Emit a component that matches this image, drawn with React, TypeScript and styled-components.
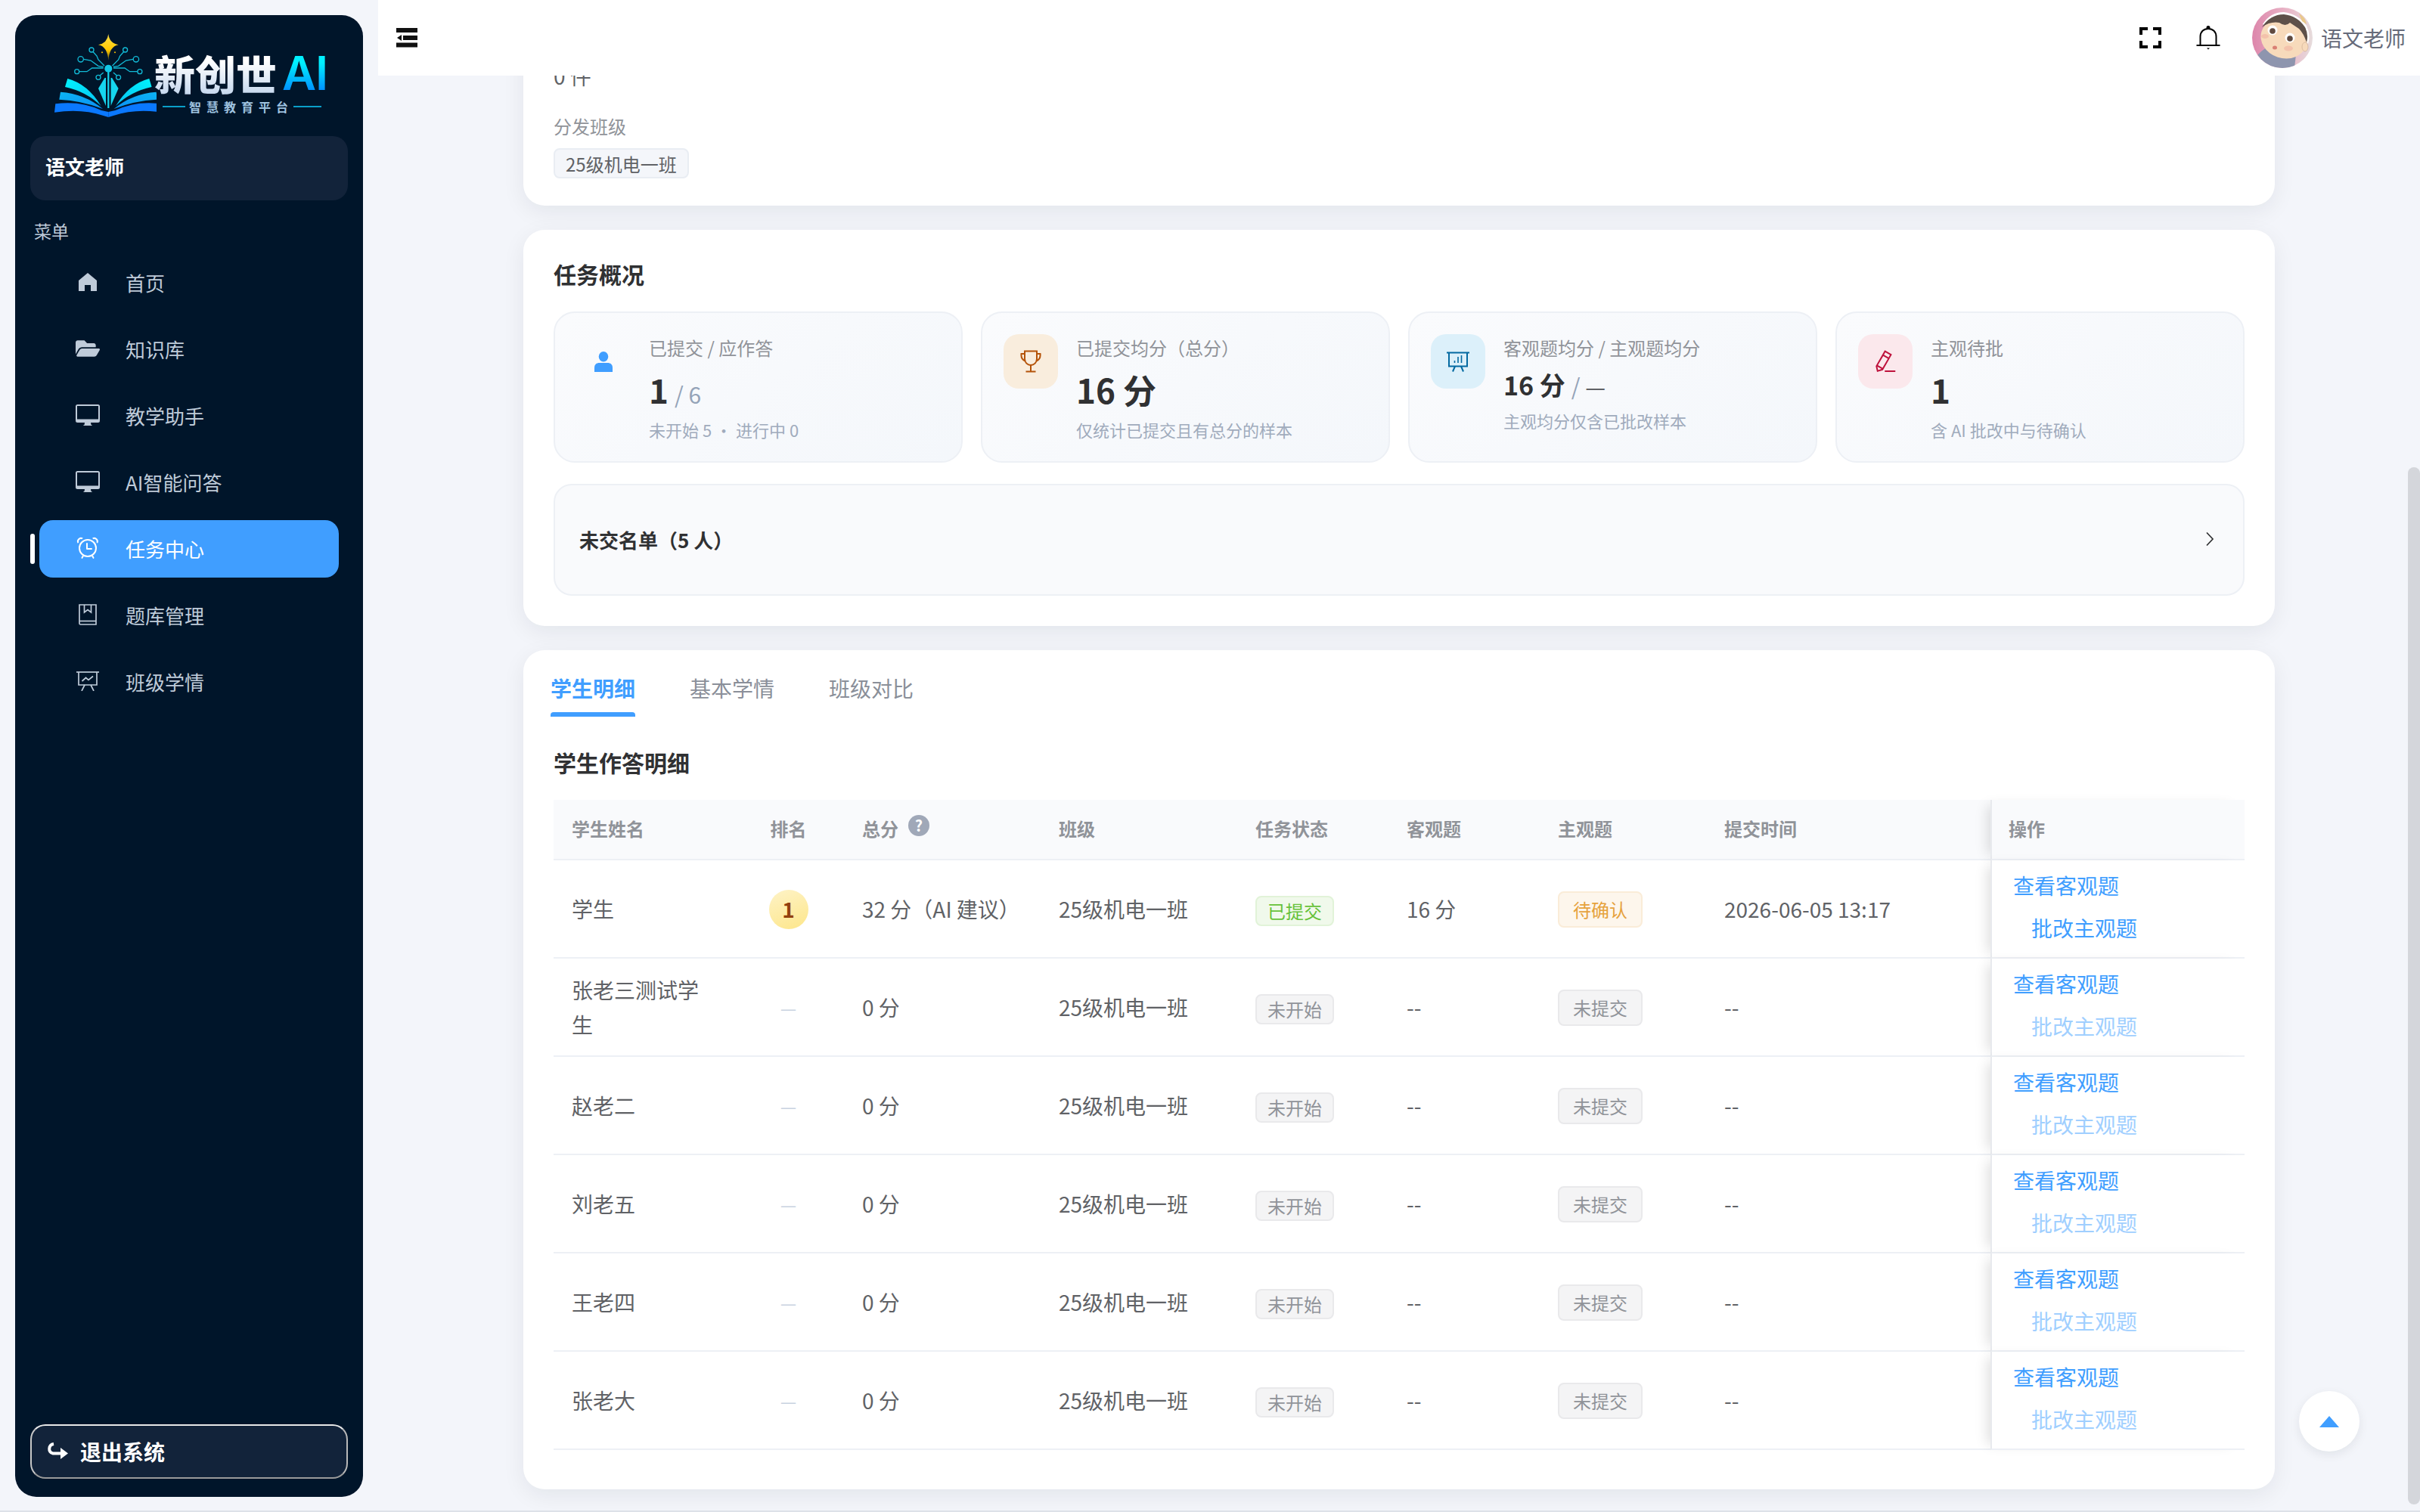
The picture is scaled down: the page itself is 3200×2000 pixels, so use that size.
import React from "react";
import styled, { createGlobalStyle } from "styled-components";
import { FaFolderOpen } from "react-icons/fa";

const Global = createGlobalStyle`
  html, body { margin: 0; padding: 0; background: #dde1e8; }
  body { font-family: "Noto Sans CJK SC", "Noto Sans", sans-serif; color: #606266; }
  * { box-sizing: border-box; }
`;

const Page = styled.div`
  display: flex;
  width: 3200px;
  height: 1998px;
  background: #f3f5fa;
  overflow: hidden;
`;

/* ---------- sidebar ---------- */
const Sidebar = styled.aside`
  flex: none;
  display: flex;
  flex-direction: column;
  width: 460px;
  height: 1960px;
  margin: 20px 20px 18px 20px;
  background: #00152a;
  border-radius: 28px;
`;
const Logo = styled.div`
  display: flex;
  height: 160px;
  padding: 23px 0 0 52px;
`;
const LogoMark = styled.svg`
  flex: none;
  width: 135px;
  height: 114px;
`;
const LogoText = styled.div`
  margin: 26px 0 0 -3px;
`;
const LogoTitle = styled.div`
  display: flex;
  align-items: center;
  height: 56px;
  white-space: nowrap;
`;
const LogoName = styled.span`
  font-size: 54px;
  line-height: 56px;
  font-weight: 900;
  background: linear-gradient(180deg, #ffffff 20%, #c6d8ee 100%);
  -webkit-background-clip: text;
  background-clip: text;
  color: transparent;
`;
const LogoAi = styled.span`
  margin-left: 7px;
  font-family: "Inter", "Liberation Sans", sans-serif;
  font-size: 62px;
  line-height: 56px;
  font-weight: 600;
  letter-spacing: -1px;
  background: linear-gradient(180deg, #00f0ff 25%, #0090ff 90%);
  -webkit-background-clip: text;
  background-clip: text;
  color: transparent;
`;
const LogoSub = styled.div`
  display: flex;
  align-items: center;
  margin: 6px 0 0 11px;
  height: 20px;
  font-size: 16px;
  line-height: 20px;
  font-weight: 700;
  letter-spacing: 7px;
  color: #9fc3e0;
  white-space: nowrap;
`;
const LogoRule = styled.i<{ $w: number }>`
  display: block;
  width: ${(p) => p.$w}px;
  height: 2px;
  margin-right: 5px;
  background: #0a9fc9;
`;
const UserBox = styled.div`
  display: flex;
  align-items: center;
  height: 85px;
  margin: 0 20px;
  padding: 0 0 6px 20px;
  background: #12233a;
  border-radius: 20px;
  color: #fff;
  font-size: 26px;
  font-weight: 700;
`;
const MenuLabel = styled.div`
  margin: 23px 0 14px 25px;
  font-size: 23px;
  line-height: 34px;
  color: #bfcbd9;
`;
const Nav = styled.nav`
  display: flex;
  flex-direction: column;
  gap: 12px;
  margin: 0 32px;
`;
const NavItem = styled.div<{ $active?: boolean }>`
  position: relative;
  display: flex;
  align-items: center;
  gap: 34px;
  height: 76px;
  padding: 0 0 2px 48px;
  border-radius: 18px;
  font-size: 26px;
  color: ${(p) => (p.$active ? "#fff" : "#bfcbd9")};
  background: ${(p) => (p.$active ? "#409eff" : "transparent")};
  ${(p) =>
    p.$active &&
    `&::before {
      content: "";
      position: absolute;
      left: -12px;
      top: 18px;
      width: 6px;
      height: 40px;
      border-radius: 3px;
      background: #fff;
    }`}
`;
const NavIcon = styled.span`
  flex: none;
  display: flex;
  align-items: center;
  justify-content: center;
  width: 32px;
  height: 32px;
  color: inherit;
`;
const Logout = styled.div`
  display: flex;
  align-items: center;
  gap: 16px;
  height: 72px;
  margin: auto 20px 24px;
  padding-left: 20px;
  background: #12233a;
  border: 2px solid;
  border-color: #e8e8e8 #b8b8b8 #9a9a9a #c8c8c8;
  border-radius: 20px;
  color: #fff;
  font-size: 28px;
  font-weight: 700;
`;

/* ---------- right column ---------- */
const Column = styled.div`
  flex: 1;
  min-width: 0;
  display: flex;
  flex-direction: column;
`;
const Header = styled.header`
  flex: none;
  display: flex;
  align-items: center;
  height: 100px;
  padding: 0 19px 0 24px;
  background: #fff;
`;
const HeaderTools = styled.div`
  display: flex;
  align-items: center;
  margin-left: auto;
`;
const Avatar = styled.svg`
  width: 80px;
  height: 80px;
  margin-left: 42px;
  border-radius: 50%;
`;
const HeaderName = styled.span`
  margin-left: 11px;
  font-size: 28px;
  color: #666b7a;
`;
const BellIcon = styled.svg`
  margin-left: 46px;
`;
const Main = styled.main`
  position: relative;
  flex: 1;
  min-height: 0;
  overflow: hidden;
`;
const Scroller = styled.div`
  display: flex;
  flex-direction: column;
  gap: 32px;
  width: 2316px;
  margin: -60px auto 0;
`;
const Card = styled.section<{ $pad: string }>`
  padding: ${(p) => p.$pad};
  background: #fff;
  border-radius: 28px;
  box-shadow: 0 8px 30px rgba(15, 23, 42, 0.07);
`;
const FieldValue = styled.div`
  font-size: 28px;
  line-height: 40px;
  color: #606266;
`;
const FieldLabel = styled.div`
  margin: 30px 0 12px;
  font-size: 24px;
  line-height: 34px;
  color: #909399;
`;
const ClassTag = styled.span`
  display: inline-flex;
  align-items: center;
  height: 40px;
  padding: 0 14px;
  background: #f4f6fa;
  border: 2px solid #e9edf3;
  border-radius: 8px;
  font-size: 24px;
  color: #606266;
`;
const SectionTitle = styled.h2`
  margin: 0;
  font-size: 30px;
  line-height: 40px;
  font-weight: 700;
  color: #303133;
`;
const StatGrid = styled.div`
  display: grid;
  grid-template-columns: repeat(4, 1fr);
  gap: 24px;
  margin-top: 30px;
`;
const Stat = styled.div`
  display: flex;
  gap: 24px;
  height: 200px;
  padding: 28px;
  background: linear-gradient(145deg, #fafbfd, #f4f7fb);
  border: 2px solid #edf0f5;
  border-radius: 28px;
`;
const StatIcon = styled.div<{ $bg: string; $fg: string }>`
  flex: none;
  display: flex;
  align-items: center;
  justify-content: center;
  width: 72px;
  height: 72px;
  border-radius: 20px;
  background: ${(p) => p.$bg};
  color: ${(p) => p.$fg};
`;
const StatBody = styled.div`
  min-width: 0;
`;
const StatLabel = styled.div`
  font-size: 24px;
  line-height: 36px;
  color: #909399;
`;
const StatValue = styled.div<{ $small?: boolean }>`
  height: ${(p) => (p.$small ? 48 : 60)}px;
  margin-top: ${(p) => (p.$small ? 7 : 7)}px;
  font-size: ${(p) => (p.$small ? 34 : 44)}px;
  line-height: ${(p) => (p.$small ? 48 : 60)}px;
  font-weight: 700;
  color: #303133;
  white-space: nowrap;
`;
const StatSuffix = styled.span`
  margin-left: 8px;
  font-size: 30px;
  line-height: 1;
  font-weight: 400;
  color: #94a3b8;
`;
const StatDash = styled.span`
  color: #606266;
`;
const StatNote = styled.div`
  margin-top: 7px;
  font-size: 22px;
  line-height: 32px;
  color: #a0abbc;
  white-space: nowrap;
`;
const MissingBar = styled.div`
  display: flex;
  align-items: center;
  justify-content: space-between;
  height: 148px;
  margin-top: 28px;
  padding: 0 38px 2px 32px;
  background: #f9fafc;
  border: 2px solid #edf0f5;
  border-radius: 24px;
  font-size: 26px;
  font-weight: 700;
  color: #303133;
`;
const Tabs = styled.div`
  display: flex;
  gap: 72px;
  margin-left: -4px;
`;
const Tab = styled.div<{ $active?: boolean }>`
  position: relative;
  height: 58px;
  font-size: 28px;
  line-height: 40px;
  font-weight: ${(p) => (p.$active ? 600 : 400)};
  color: ${(p) => (p.$active ? "#409eff" : "#8a8f99")};
  ${(p) =>
    p.$active &&
    `&::after {
      content: "";
      position: absolute;
      left: 0;
      right: 0;
      bottom: 0;
      height: 6px;
      border-radius: 4px 4px 0 0;
      background: #409eff;
    }`}
`;
const TableTitle = styled(SectionTitle)`
  margin: 40px 0 30px;
`;
const Table = styled.table`
  width: 2236px;
  table-layout: fixed;
  border-collapse: separate;
  border-spacing: 0;
`;
const Col = styled.col<{ $w: number }>`
  width: ${(p) => p.$w}px;
`;
const Th = styled.th<{ $center?: boolean }>`
  height: 80px;
  padding: 0 24px 4px;
  background: #f9fafc;
  border-bottom: 2px solid #edf0f5;
  text-align: ${(p) => (p.$center ? "center" : "left")};
  font-size: 24px;
  font-weight: 700;
  color: #909399;
`;
const ActionTh = styled(Th)`
  position: relative;
  padding-left: 22px;
  border-left: 2px solid #e8eaee;
  box-shadow: -12px 0 16px -8px rgba(0, 0, 0, 0.13);
`;
const Help = styled.span`
  display: inline-flex;
  align-items: center;
  justify-content: center;
  width: 28px;
  height: 28px;
  margin-left: 13px;
  border-radius: 50%;
  background: #a0a8b8;
  color: #fff;
  font-size: 20px;
  line-height: 1;
  vertical-align: 6px;
`;
const Td = styled.td<{ $center?: boolean }>`
  height: 130px;
  padding: 0 24px;
  background: #fff;
  border-bottom: 2px solid #edf0f5;
  text-align: ${(p) => (p.$center ? "center" : "left")};
  font-size: 28px;
  line-height: 46px;
  color: #606266;
`;
const ActionTd = styled(Td)`
  position: relative;
  padding-left: 28px;
  border-left: 2px solid #e8eaee;
  box-shadow: -12px 0 16px -8px rgba(0, 0, 0, 0.13);
`;
const Actions = styled.div`
  display: flex;
  flex-direction: column;
  align-items: flex-start;
  gap: 16px;
  margin-top: -6px;
`;
const ActionLink = styled.span<{ $indent?: boolean; $off?: boolean }>`
  margin-left: ${(p) => (p.$indent ? 24 : 0)}px;
  line-height: 40px;
  color: ${(p) => (p.$off ? "#a0cfff" : "#409eff")};
`;
const RankBadge = styled.span`
  display: inline-flex;
  align-items: center;
  justify-content: center;
  width: 52px;
  height: 52px;
  padding-bottom: 2px;
  border-radius: 50%;
  background: linear-gradient(160deg, #fef3c7, #fde68a);
  font-size: 28px;
  font-weight: 700;
  color: #92400e;
  vertical-align: middle;
`;
const RankDash = styled.span`
  font-size: 24px;
  color: #c8d2e0;
`;

const tagTone = {
  success: { bg: "#f0f9eb", line: "#e1f3d8", fg: "#67c23a" },
  warning: { bg: "#fdf6ec", line: "#faecd8", fg: "#e6a23c" },
  muted: { bg: "#f4f4f5", line: "#e9e9eb", fg: "#909399" },
};
const StatusTag = styled.span<{ $tone: keyof typeof tagTone; $big?: boolean }>`
  display: inline-flex;
  align-items: center;
  height: ${(p) => (p.$big ? 48 : 40)}px;
  padding: 0 ${(p) => (p.$big ? 18 : 14)}px;
  background: ${(p) => tagTone[p.$tone].bg};
  border: 2px solid ${(p) => tagTone[p.$tone].line};
  border-radius: 8px;
  font-size: 24px;
  line-height: 1;
  color: ${(p) => tagTone[p.$tone].fg};
  vertical-align: middle;
  transform: translateY(-1px);
`;

const Thumb = styled.div`
  position: absolute;
  top: 518px;
  right: 0;
  width: 16px;
  height: 1372px;
  border-radius: 8px;
  background: #d4d6db;
`;
const BackTop = styled.div`
  position: absolute;
  right: 80px;
  bottom: 78px;
  display: flex;
  align-items: center;
  justify-content: center;
  width: 80px;
  height: 80px;
  border-radius: 50%;
  background: #fff;
  box-shadow: 0 4px 14px rgba(15, 23, 42, 0.08);
`;

/* ---------- drawings ---------- */
const EP = ({ size = 32, children }: { size?: number; children: React.ReactNode }) => (
  <svg width={size} height={size} viewBox="0 0 1024 1024" fill="currentColor">
    {children}
  </svg>
);
const HomeIcon = () => (
  <EP>
    <path d="M512 128 128 447.936V896h255.936V640H640v256h255.936V447.936z" />
  </EP>
);
const MonitorIcon = () => (
  <svg width="32" height="28" viewBox="0 0 32 28" fill="currentColor">
    <path
      fillRule="evenodd"
      d="M2.5 0h27A2.5 2.5 0 0 1 32 2.5v19a2.5 2.5 0 0 1-2.5 2.5h-27A2.5 2.5 0 0 1 0 21.500v-19A2.500 2.500 0 0 1 2.500 0zM2 2v17.500h28V2z"
    />
    <path d="M12 24h8l.5 3h1v1h-11v-1h1z" />
  </svg>
);
const AlarmIcon = () => (
  <EP>
    <path d="M512 832a320 320 0 1 0 0-640 320 320 0 0 0 0 640zm0 64a384 384 0 1 1 0-768 384 384 0 0 1 0 768z" />
    <path d="m292.288 824.576 55.424 32-48 83.136a32 32 0 1 1-55.424-32l48-83.136zm439.424 0-55.424 32 48 83.136a32 32 0 1 0 55.424-32l-48-83.136zM512 512h160a32 32 0 0 1 0 64H480a32 32 0 0 1-32-32V320a32 32 0 0 1 64 0v192zM90.496 312.256A160 160 0 0 1 312.320 90.496l-46.848 46.848a96 96 0 0 0-128 128L90.560 312.256zm835.264 0A160 160 0 0 0 704 90.496l46.848 46.848a96 96 0 0 1 128 128l46.912 46.912z" />
  </EP>
);
const BookIcon = () => (
  <svg width="24" height="28" viewBox="0 0 24 28" fill="none" stroke="currentColor" strokeWidth="1.7">
    <path d="M1 1h22v26H2.500A1.500 1.500 0 0 1 1 25.500z" />
    <path d="M1 22.500h22" />
    <path d="M7.500 1v10l4.500-3.500L16.500 11V1" />
  </svg>
);
const BoardLineIcon = () => (
  <svg width="30" height="26" viewBox="0 0 30 26" fill="none" stroke="currentColor" strokeWidth="1.7">
    <path d="M0 1h30" />
    <path d="M3 1v17h24V1" />
    <path d="M11 18l-4 8M19 18l4 8" />
    <path d="M7.500 13l5-4.500 3.500 3 6-5" />
  </svg>
);
const LogoutIcon = () => (
  <svg width="28" height="24" viewBox="0 0 28 24" fill="none">
    <path d="M9 2C2 3 1 13 8 14.500h11" stroke="#fff" strokeWidth="4" />
    <path d="M18 7l10 7.500L18 22z" fill="#fff" />
  </svg>
);
const FoldIcon = () => (
  <svg width="28" height="26" viewBox="0 0 28 26" fill="#111">
    <rect width="28" height="6" />
    <rect x="9" y="10" width="19" height="6" />
    <rect y="19.500" width="28" height="6" />
    <path d="M1 13l6-4v8z" />
  </svg>
);
const FullIcon = () => (
  <svg width="29" height="28" viewBox="0 0 29 28" fill="none" stroke="#000" strokeWidth="4">
    <path d="M11 2H2v8M18 2h9v8M11 26H2v-8M18 26h9v-8" />
  </svg>
);
const Bell = () => (
  <BellIcon width="32" height="32" viewBox="0 0 32 32" fill="none" stroke="#000" strokeWidth="2">
    <circle cx="16" cy="2.500" r="1.500" fill="#000" />
    <path d="M5.500 25V14.500C5.500 8 10 4 16 4s10.500 4 10.500 10.500V25" />
    <path d="M0.500 26h31" />
    <path d="M14 29.500h4l-2 2z" fill="#000" stroke="none" />
  </BellIcon>
);
const UserFig = () => (
  <svg width="24" height="27" viewBox="0 0 24 27" fill="currentColor">
    <ellipse cx="12" cy="6.800" rx="6.300" ry="6.800" />
    <path d="M0 27v-5.500C0 17 3 15 6.500 15h11c3.500 0 6.500 2 6.500 6.500V27z" />
  </svg>
);
const TrophyIcon = () => (
  <svg width="28" height="30" viewBox="0 0 28 30" fill="none" stroke="currentColor" strokeWidth="2">
    <path d="M6 1.500h16v10.500a8 8 0 0 1-16 0z" />
    <path d="M6 5H1.500c-.5 4.500 1 8 5.500 9.500M22 5h4.500c.5 4.500-1 8-5.500 9.500" />
    <path d="M14 20v8.500M7.500 28.500h13" />
  </svg>
);
const BoardIcon = () => (
  <svg width="30" height="27" viewBox="0 0 30 27" fill="none" stroke="currentColor" strokeWidth="2">
    <path d="M0 1.500h30" />
    <path d="M3 1.500v18h24v-18" />
    <path d="M11 19.500l-3 7M19 19.500l3 7" />
    <path d="M10.500 15v-3M15 15V7M19.500 15V5" strokeWidth="1.600" />
  </svg>
);
const PenIcon = () => (
  <EP>
    <path d="m199.04 672.64 193.984 112 224-387.968-193.920-112-224 388.032zm-23.872 60.160 32.896 148.288 144.896-45.696L175.168 732.800zM455.040 229.248l193.920 112 56.704-98.112-193.984-112-56.640 98.112zM104.320 708.800l384-665.024 304.768 175.936L409.152 884.800h.064l-248.448 78.336L104.320 708.800zm384 254.272v-64h448v64h-448z" />
  </EP>
);
const Chevron = () => (
  <svg width="12" height="20" viewBox="0 0 12 20" fill="none" stroke="#303133" strokeWidth="1.700">
    <path d="M2 1.500l8 8.500-8 8.500" />
  </svg>
);

const AvatarPic = () => (
  <Avatar viewBox="0 0 80 80">
    <defs>
      <linearGradient id="avBg" x1="0" y1="0" x2="1" y2="0">
        <stop offset="0" stopColor="#dd86ab" />
        <stop offset="0.6" stopColor="#e9b7c8" />
        <stop offset="1" stopColor="#e6dcdc" />
      </linearGradient>
    </defs>
    <rect width="80" height="80" fill="url(#avBg)" />
    <path d="M2 70 Q10 56 26 50 L58 62 L56 80 H6z" fill="#8e95ae" />
    <path d="M14 22 Q24 6 42 6 Q60 8 72 24 Q78 36 74 48 L60 30 L22 26z" fill="#fff" />
    <ellipse cx="42" cy="41" rx="31" ry="26" transform="rotate(18 42 41)" fill="#f7dabb" />
    <path d="M13 26 Q24 9 42 9 Q60 11 70 26 Q75 36 72 46 Q68 34 62 28 Q56 24 50 20 Q44 26 36 20 Q24 18 13 26z" fill="#5e5049" />
    <path d="M62 8 Q70 12 72 22 L66 18z" fill="#e9c98a" />
    <circle cx="27" cy="30" r="6.500" fill="#fff" />
    <circle cx="27" cy="31" r="3.800" fill="#5f4a40" />
    <circle cx="50" cy="40" r="6.500" fill="#fff" />
    <circle cx="50" cy="41" r="3.800" fill="#5f4a40" />
    <ellipse cx="30" cy="53" rx="3" ry="2.500" fill="#d97f74" />
    <ellipse cx="17" cy="38" rx="5" ry="3" fill="#f3c2ab" />
    <ellipse cx="48" cy="54" rx="6" ry="3.500" fill="#f3c2ab" />
    <ellipse cx="70" cy="52" rx="4" ry="6" fill="#f7dabb" stroke="#c9a98e" strokeWidth="0.600" />
  </Avatar>
);

const CircuitHalf = () => (
  <g fill="none" stroke="#12bcd8" strokeWidth="1.300">
    <circle cx="49" cy="23" r="3" />
    <path d="M51 25.500l5 5.500 2 5 8 8" />
    <circle cx="34.700" cy="35.300" r="3.700" />
    <path d="M38.500 35.300L48 37l10 7.300 6.700 1" />
    <circle cx="29.700" cy="51.700" r="3" />
    <path d="M32.700 51.700H43l6.700-4.700h15" />
    <circle cx="58" cy="59.300" r="3" />
    <path d="M60 57l4.700-4" />
    <path d="M66.500 60L58 74l10 23V60z" fill="#16d6ee" stroke="none" />
  </g>
);
const BookHalf = () => (
  <g>
    <path d="M17.300 61Q44 68 61.500 97 42 78 14 72z" fill="url(#lgTop)" />
    <path d="M8 78.700Q40 81 64 101 36 90 6.300 88.700z" fill="url(#lgMid)" />
    <path d="M1.300 94.300Q35 90 62 103l9.300 2v7l-6.600-2Q35 100 0 105.700z" fill="#0a78ff" />
  </g>
);
const LogoDrawing = () => (
  <LogoMark viewBox="0 0 135 114">
    <defs>
      <linearGradient id="lgTop" x1="0" y1="0" x2="1" y2="1">
        <stop offset="0" stopColor="#00f4ff" />
        <stop offset="1" stopColor="#08c0f0" />
      </linearGradient>
      <linearGradient id="lgMid" x1="0" y1="0" x2="1" y2="1">
        <stop offset="0" stopColor="#0cb4f4" />
        <stop offset="1" stopColor="#0a90f4" />
      </linearGradient>
      <linearGradient id="lgStar" x1="0" y1="0" x2="0" y2="1">
        <stop offset="0" stopColor="#ffe14a" />
        <stop offset="0.6" stopColor="#ffc800" />
        <stop offset="1" stopColor="#6a5a10" />
      </linearGradient>
    </defs>
    <CircuitHalf />
    <g transform="translate(142.6 0) scale(-1 1)">
      <CircuitHalf />
    </g>
    <path d="M71.300 48v52" stroke="#16d6ee" strokeWidth="2.200" />
    <BookHalf />
    <g transform="translate(142.600 0) scale(-1 1)">
      <BookHalf />
    </g>
    <circle cx="71.300" cy="47.700" r="5" fill="#12c8e6" />
    <path d="M71.300 2Q72.500 14 84.700 16.300 72.500 18.500 71.300 37 70 18.500 58 16.300 70 14 71.300 2z" fill="url(#lgStar)" />
    <circle cx="63" cy="26.300" r="1" fill="#ffc800" />
    <circle cx="80" cy="26.300" r="1" fill="#ffc800" />
  </LogoMark>
);

/* ---------- data ---------- */
const navItems = [
  { label: "首页", icon: <HomeIcon /> },
  { label: "知识库", icon: <FaFolderOpen size={32} /> },
  { label: "教学助手", icon: <MonitorIcon /> },
  { label: "AI智能问答", icon: <MonitorIcon /> },
  { label: "任务中心", icon: <AlarmIcon />, active: true },
  { label: "题库管理", icon: <BookIcon /> },
  { label: "班级学情", icon: <BoardLineIcon /> },
];
const pendingNames = ["张老三测试学生", "赵老二", "刘老五", "王老四", "张老大"];
const colWidths = [237, 147, 260, 260, 200, 200, 220, 376, 336];

const App = () => (
  <Page>
    <Global />
    <Sidebar>
      <Logo>
        <LogoDrawing />
        <LogoText>
          <LogoTitle>
            <LogoName>新创世</LogoName>
            <LogoAi>AI</LogoAi>
          </LogoTitle>
          <LogoSub>
            <LogoRule $w={30} />
            智慧教育平台
            <LogoRule $w={37} />
          </LogoSub>
        </LogoText>
      </Logo>
      <UserBox>语文老师</UserBox>
      <MenuLabel>菜单</MenuLabel>
      <Nav>
        {navItems.map((item) => (
          <NavItem key={item.label} $active={item.active}>
            <NavIcon>{item.icon}</NavIcon>
            {item.label}
          </NavItem>
        ))}
      </Nav>
      <Logout>
        <LogoutIcon />
        退出系统
      </Logout>
    </Sidebar>
    <Column>
      <Header>
        <FoldIcon />
        <HeaderTools>
          <FullIcon />
          <Bell />
          <AvatarPic />
          <HeaderName>语文老师</HeaderName>
        </HeaderTools>
      </Header>
      <Main>
        <Scroller>
          <Card $pad="40px 40px 36px">
            <FieldValue>0 件</FieldValue>
            <FieldLabel>分发班级</FieldLabel>
            <ClassTag>25级机电一班</ClassTag>
          </Card>
          <Card $pad="38px 40px 40px">
            <SectionTitle>任务概况</SectionTitle>
            <StatGrid>
              <Stat>
                <StatIcon $bg="transparent" $fg="#409eff">
                  <UserFig />
                </StatIcon>
                <StatBody>
                  <StatLabel>已提交 / 应作答</StatLabel>
                  <StatValue>
                    1<StatSuffix>/ 6</StatSuffix>
                  </StatValue>
                  <StatNote>未开始 5 · 进行中 0</StatNote>
                </StatBody>
              </Stat>
              <Stat>
                <StatIcon $bg="#f9eddd" $fg="#b45309">
                  <TrophyIcon />
                </StatIcon>
                <StatBody>
                  <StatLabel>已提交均分（总分）</StatLabel>
                  <StatValue>16 分</StatValue>
                  <StatNote>仅统计已提交且有总分的样本</StatNote>
                </StatBody>
              </Stat>
              <Stat>
                <StatIcon $bg="#dcf0fa" $fg="#0369a1">
                  <BoardIcon />
                </StatIcon>
                <StatBody>
                  <StatLabel>客观题均分 / 主观题均分</StatLabel>
                  <StatValue $small>
                    16 分
                    <StatSuffix>
                      / <StatDash>—</StatDash>
                    </StatSuffix>
                  </StatValue>
                  <StatNote>主观均分仅含已批改样本</StatNote>
                </StatBody>
              </Stat>
              <Stat>
                <StatIcon $bg="#fbe8ec" $fg="#be123c">
                  <PenIcon />
                </StatIcon>
                <StatBody>
                  <StatLabel>主观待批</StatLabel>
                  <StatValue>1</StatValue>
                  <StatNote>含 AI 批改中与待确认</StatNote>
                </StatBody>
              </Stat>
            </StatGrid>
            <MissingBar>
              未交名单（5 人）
              <Chevron />
            </MissingBar>
          </Card>
          <Card $pad="30px 40px 52px">
            <Tabs>
              <Tab $active>学生明细</Tab>
              <Tab>基本学情</Tab>
              <Tab>班级对比</Tab>
            </Tabs>
            <TableTitle>学生作答明细</TableTitle>
            <Table>
              <colgroup>
                {colWidths.map((w, i) => (
                  <Col key={i} $w={w} />
                ))}
              </colgroup>
              <thead>
                <tr>
                  <Th>学生姓名</Th>
                  <Th $center>排名</Th>
                  <Th>
                    总分
                    <Help>?</Help>
                  </Th>
                  <Th>班级</Th>
                  <Th>任务状态</Th>
                  <Th>客观题</Th>
                  <Th>主观题</Th>
                  <Th>提交时间</Th>
                  <ActionTh>操作</ActionTh>
                </tr>
              </thead>
              <tbody>
                <tr>
                  <Td>学生</Td>
                  <Td $center>
                    <RankBadge>1</RankBadge>
                  </Td>
                  <Td>32 分（AI 建议）</Td>
                  <Td>25级机电一班</Td>
                  <Td>
                    <StatusTag $tone="success">已提交</StatusTag>
                  </Td>
                  <Td>16 分</Td>
                  <Td>
                    <StatusTag $tone="warning" $big>
                      待确认
                    </StatusTag>
                  </Td>
                  <Td>2026-06-05 13:17</Td>
                  <ActionTd>
                    <Actions>
                      <ActionLink>查看客观题</ActionLink>
                      <ActionLink $indent>批改主观题</ActionLink>
                    </Actions>
                  </ActionTd>
                </tr>
                {pendingNames.map((name) => (
                  <tr key={name}>
                    <Td>{name}</Td>
                    <Td $center>
                      <RankDash>—</RankDash>
                    </Td>
                    <Td>0 分</Td>
                    <Td>25级机电一班</Td>
                    <Td>
                      <StatusTag $tone="muted">未开始</StatusTag>
                    </Td>
                    <Td>--</Td>
                    <Td>
                      <StatusTag $tone="muted" $big>
                        未提交
                      </StatusTag>
                    </Td>
                    <Td>--</Td>
                    <ActionTd>
                      <Actions>
                        <ActionLink>查看客观题</ActionLink>
                        <ActionLink $indent $off>
                          批改主观题
                        </ActionLink>
                      </Actions>
                    </ActionTd>
                  </tr>
                ))}
              </tbody>
            </Table>
          </Card>
        </Scroller>
        <Thumb />
        <BackTop>
          <svg width="26" height="15" viewBox="0 0 26 15" fill="#409eff">
            <path d="M13 0l13 15H0z" />
          </svg>
        </BackTop>
      </Main>
    </Column>
  </Page>
);

export default App;
